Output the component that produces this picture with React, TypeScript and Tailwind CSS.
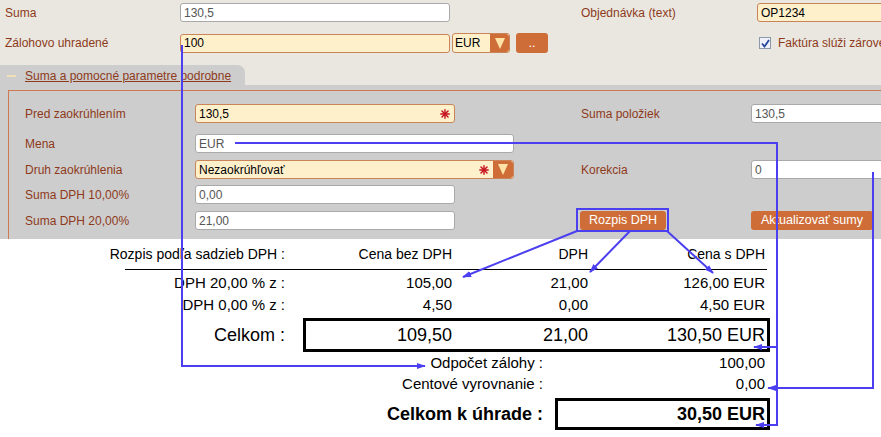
import React from 'react';

const BLUE = '#4b3ff0';

function Star() {
  return (
    <svg width="10" height="10" viewBox="0 0 10 10" className="shrink-0">
      <g stroke="#c3101a" strokeWidth="1.4" strokeLinecap="round">
        <line x1="5" y1="0.8" x2="5" y2="9.2" />
        <line x1="0.8" y1="5" x2="9.2" y2="5" />
        <line x1="2" y1="2" x2="8" y2="8" />
        <line x1="8" y1="2" x2="2" y2="8" />
      </g>
    </svg>
  );
}

function Arrow({ w = 20 }: { w?: number }) {
  return (
    <div className="h-full flex items-center justify-center bg-[#cf6d38] rounded-r-[3px] shrink-0" style={{ width: w }}>
      <svg width="10" height="11" viewBox="0 0 10 11">
        <polygon points="0,0 10,0 5,11" fill="#ffe2a6" />
      </svg>
    </div>
  );
}

interface InputProps {
  value: string;
  cream?: boolean;
  req?: boolean;
  className?: string;
}

function Input({ value, cream, req, className = '' }: InputProps) {
  return (
    <div
      className={
        'h-[19px] rounded-[3px] border flex items-center pl-[3px] pr-[4px] text-[12px] shrink-0 ' +
        (cream ? 'bg-[#fff0cc] border-[#c98559] text-black ' : 'bg-white border-[#a9a9a9] text-[#555] ') +
        className
      }
    >
      <span className="flex-1 whitespace-nowrap">{value}</span>
      {req && <Star />}
    </div>
  );
}

function Label({ children, w }: { children: React.ReactNode; w: string }) {
  return <div className={'text-[12px] text-[#8d3a1b] whitespace-nowrap shrink-0 ' + w}>{children}</div>;
}

function OrangeBtn({ children, className = '' }: { children: React.ReactNode; className?: string }) {
  return (
    <div className={'h-[19px] rounded-[3px] bg-[#cf6d38] text-white text-[12.5px] flex items-center justify-center shrink-0 ' + className}>
      {children}
    </div>
  );
}

function Overlay() {
  return (
    <svg className="absolute left-0 top-0 pointer-events-none" width="881" height="437" viewBox="0 0 881 437">
      <defs>
        <marker id="ah" viewBox="0 0 10 10" refX="9" refY="5" markerWidth="4.5" markerHeight="4.5" orient="auto">
          <polygon points="0,1.5 10,5 0,8.5" fill={BLUE} />
        </marker>
      </defs>
      <g stroke={BLUE} strokeWidth="2" fill="none">
        <polyline points="182,45 182,366 425,366" markerEnd="url(#ah)" />
        <polyline points="235,143 777,143 777,425 756,425" markerEnd="url(#ah)" />
        <polyline points="777,347 754,347" markerEnd="url(#ah)" />
        <polyline points="873,172 873,388 768,388" markerEnd="url(#ah)" />
        <rect x="577" y="209" width="91" height="22" />
        <line x1="577" y1="231" x2="463" y2="277" markerEnd="url(#ah)" />
        <line x1="630" y1="231" x2="590" y2="272" markerEnd="url(#ah)" />
        <line x1="667" y1="231" x2="713" y2="273" markerEnd="url(#ah)" />
      </g>
    </svg>
  );
}

export default function App() {
  return (
    <div className="relative w-[881px] h-[437px] overflow-hidden bg-white font-['Liberation_Sans',Arial,sans-serif]">
      {/* top */}
      <div className="bg-[#e9e7e0]">
        <div className="pt-[3px] flex items-center">
          <Label w="w-[180px] pl-[5px]">Suma</Label>
          <Input value="130,5" className="w-[270px]" />
          <div className="w-[131px] shrink-0" />
          <Label w="w-[176px]">Objednávka (text)</Label>
          <Input value="OP1234" cream className="w-[200px]" />
        </div>
        <div className="mt-[11px] flex items-center h-[20px]">
          <Label w="w-[180px] pl-[5px]">Zálohovo uhradené</Label>
          <Input value="100" cream className="w-[270px]" />
          <div className="ml-[2px] w-[58px] h-[20px] flex rounded-[3px] border border-[#c98559] bg-[#fff0cc] overflow-hidden shrink-0">
            <span className="flex-1 text-[12px] pl-[2px] leading-[18px] text-black">EUR</span>
            <Arrow w={19} />
          </div>
          <OrangeBtn className="ml-[6px] w-[32px] h-[20px] text-[10px]">..</OrangeBtn>
          <div className="w-[211px] shrink-0" />
          <div className="w-[12px] h-[12px] border border-[#8d98ad] bg-[#eef1f7] flex items-center justify-center shrink-0">
            <svg width="9" height="9" viewBox="0 0 9 9">
              <polyline points="1,4.5 3.5,7.5 8,1" fill="none" stroke="#26459b" strokeWidth="1.8" />
            </svg>
          </div>
          <span className="ml-[7px] text-[12px] text-[#8d3a1b] whitespace-nowrap">Faktúra slúži zároveň</span>
        </div>
        <div className="mt-[12px] flex h-[20px]">
          <div className="w-[245px] bg-[#cdcdcd] rounded-tr-[8px] flex items-center pt-[2px]">
            <div className="ml-[7px] w-[9px] h-[2px] bg-[#f1e1b4]" />
            <a className="ml-[9px] text-[12px] text-[#8d3a1b] underline whitespace-nowrap">Suma a pomocné parametre podrobne</a>
          </div>
        </div>
      </div>

      {/* panel */}
      <div className="bg-[#cdcdcd] pt-[5px] pl-[8px]">
        <div className="border-l border-t border-[#cd7a52] pt-[13px] pb-[9px] pl-[16px]">
          <div className="flex items-center">
            <div className="w-[556px] flex items-center shrink-0">
              <Label w="w-[170px]">Pred zaokrúhlením</Label>
              <Input value="130,5" cream req className="w-[260px]" />
            </div>
            <Label w="w-[170px]">Suma položiek</Label>
            <Input value="130,5" className="w-[200px]" />
          </div>
          <div className="mt-[11px] flex items-center">
            <Label w="w-[170px]">Mena</Label>
            <Input value="EUR" className="w-[319px]" />
          </div>
          <div className="mt-[7px] flex items-center">
            <div className="w-[556px] flex items-center shrink-0">
              <Label w="w-[170px]">Druh zaokrúhlenia</Label>
              <div className="w-[319px] h-[19px] flex rounded-[3px] border border-[#c98559] bg-[#fff0cc] overflow-hidden shrink-0">
                <div className="flex-1 flex items-center pl-[3px] pr-[4px] text-[12px] text-black">
                  <span className="flex-1">Nezaokrúhľovať</span>
                  <Star />
                </div>
                <Arrow w={20} />
              </div>
            </div>
            <Label w="w-[170px]">Korekcia</Label>
            <Input value="0" className="w-[200px]" />
          </div>
          <div className="mt-[6px] flex items-center">
            <Label w="w-[170px]">Suma DPH 10,00%</Label>
            <Input value="0,00" className="w-[260px]" />
          </div>
          <div className="mt-[7px] flex items-center">
            <div className="w-[556px] flex items-center shrink-0">
              <Label w="w-[170px]">Suma DPH 20,00%</Label>
              <Input value="21,00" className="w-[260px]" />
            </div>
            <OrangeBtn className="-ml-[1px] w-[86px]">Rozpis DPH</OrangeBtn>
            <div className="w-[85px] shrink-0" />
            <OrangeBtn className="w-[122px]">Aktualizovať sumy</OrangeBtn>
          </div>
        </div>
      </div>

      {/* table */}
      <div className="pt-[4px] text-[15px] text-black">
        <div className="flex h-[22px] items-center text-[14px]">
          <div className="w-[285px] text-right shrink-0">Rozpis podľa sadzieb DPH :</div>
          <div className="w-[167px] text-right shrink-0">Cena bez DPH</div>
          <div className="w-[136px] text-right shrink-0">DPH</div>
          <div className="w-[177px] text-right shrink-0">Cena s DPH</div>
        </div>
        <div className="mt-[4px] ml-[125px] w-[642px] border-t border-black" />
        <div className="mt-[2px] flex h-[22px] items-center">
          <div className="w-[285px] text-right shrink-0">DPH 20,00 % z :</div>
          <div className="w-[167px] text-right shrink-0">105,00</div>
          <div className="w-[136px] text-right shrink-0">21,00</div>
          <div className="w-[177px] text-right shrink-0">126,00 EUR</div>
        </div>
        <div className="flex h-[22px] items-center">
          <div className="w-[285px] text-right shrink-0">DPH 0,00 % z :</div>
          <div className="w-[167px] text-right shrink-0">4,50</div>
          <div className="w-[136px] text-right shrink-0">0,00</div>
          <div className="w-[177px] text-right shrink-0">4,50 EUR</div>
        </div>
        <div className="mt-[2px] flex items-center text-[18px]">
          <div className="w-[285px] text-right shrink-0">Celkom :</div>
          <div className="ml-[18px] w-[467px] h-[34px] border-[3px] border-black flex items-center shrink-0">
            <div className="w-[146px] text-right shrink-0">109,50</div>
            <div className="w-[136px] text-right shrink-0">21,00</div>
            <div className="w-[177px] text-right shrink-0">130,50 EUR</div>
          </div>
        </div>
        <div className="flex h-[22px] items-center">
          <div className="w-[543px] text-right shrink-0">Odpočet zálohy :</div>
          <div className="w-[222px] text-right shrink-0">100,00</div>
        </div>
        <div className="flex h-[20px] items-center">
          <div className="w-[543px] text-right shrink-0">Centové vyrovnanie :</div>
          <div className="w-[222px] text-right shrink-0">0,00</div>
        </div>
        <div className="mt-[4px] flex items-center text-[18px] font-bold">
          <div className="w-[543px] text-right shrink-0">Celkom k úhrade :</div>
          <div className="ml-[12px] w-[215px] h-[32px] border-[3px] border-black flex items-center justify-end pr-[2px] shrink-0">
            30,50 EUR
          </div>
        </div>
      </div>

      <Overlay />
    </div>
  );
}
